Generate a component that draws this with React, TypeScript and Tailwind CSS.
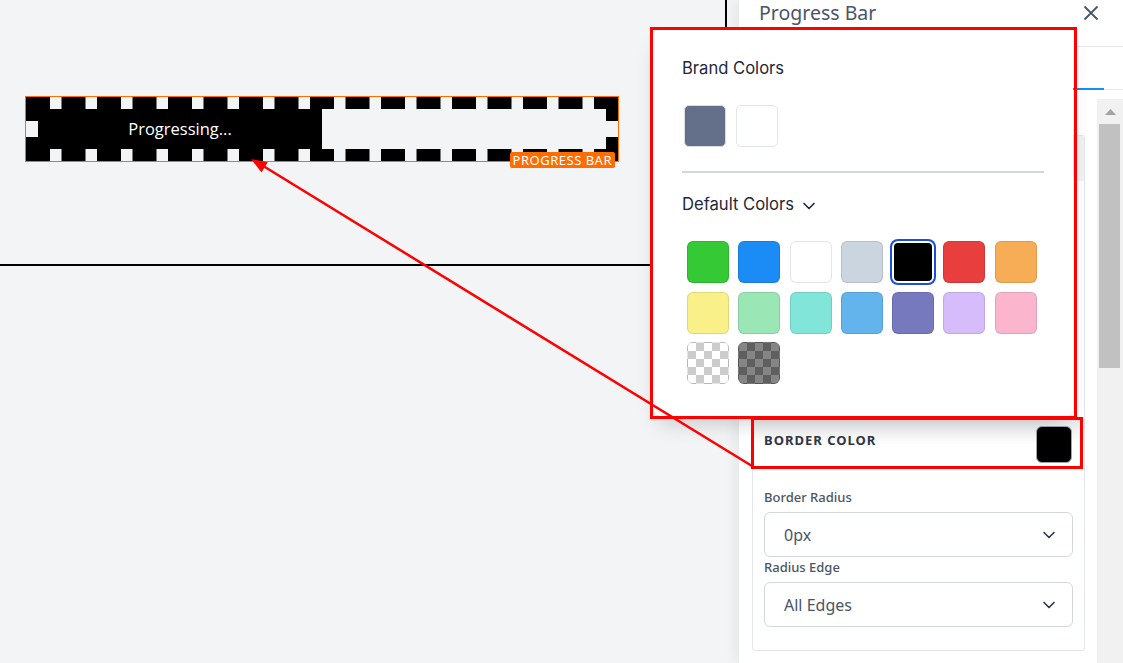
import React from 'react';
import { ChevronDown } from 'lucide-react';

const defaultSwatches = [
    'bg-[#34c935]',
    'bg-[#1b8cf5]',
    'bg-white',
    'bg-[#cbd5e0]',
    'bg-black',
    'bg-[#e83e3e]',
    'bg-[#f6ad55]',
    'bg-[#faf089]',
    'bg-[#9ae6b4]',
    'bg-[#81e6d9]',
    'bg-[#63b3ed]',
    'bg-[#7679bd]',
    'bg-[#d6bcfa]',
    'bg-[#fbb6ce]',
    '[background-image:repeating-conic-gradient(#cccccc_0%_25%,#ffffff_0%_50%)] [background-size:16px_16px]',
    '[background-image:repeating-conic-gradient(#5f5f5f_0%_25%,#858585_0%_50%)] [background-size:16px_16px]',
];

const SelectBox = ({ value }: { value: string }) => (
    <div className="flex h-[45px] items-center justify-between rounded-[6px] border border-[#d4d8de] bg-white pl-[19px] pr-[13px] text-[16px] text-[#4a5568]">
        <span>{value}</span>
        <ChevronDown size={20} strokeWidth={2} className="text-[#2d3748]" />
    </div>
);

const Field = ({ label, value }: { label: string; value: string }) => (
    <div>
        <div className="mb-[5px] text-[13px] font-medium leading-[20px] text-[#4a5568]">{label}</div>
        <SelectBox value={value} />
    </div>
);

const ColorPopover = () => (
    <div className="absolute left-[653px] top-[29px] h-[387px] w-[420px] rounded-[8px] bg-white px-[29px] pt-[27px] font-['Inter',sans-serif] shadow-[0_12px_22px_-6px_rgba(0,0,0,0.2)]">
        <div className="text-[16.6px] leading-[24px] text-[#1e293b]">Brand Colors</div>
        <div className="mt-[25px] flex gap-[10px] pl-[2px]">
            <div className="h-[42px] w-[42px] rounded-[5px] border border-[#d9dde3] bg-[#64708a]" />
            <div className="h-[42px] w-[42px] rounded-[5px] border border-[#e2e5ea] bg-white" />
        </div>
        <div className="mt-[24px] h-[2px] bg-[#cfd6e0]" />
        <div className="mt-[19px] flex items-center gap-[5px] text-[16.6px] leading-[24px] text-[#1e293b]">
            <span>Default Colors</span>
            <ChevronDown size={20} strokeWidth={2} className="mt-[3px]" />
        </div>
        <div className="mt-[25px] grid grid-cols-[repeat(7,42px)] gap-x-[9.3px] gap-y-[8.7px] pl-[5px]">
            {defaultSwatches.map((cls, i) =>
                i === 4 ? (
                    <div key={i} className="h-[42px] w-[42px] rounded-[6px] border-2 border-white bg-black ring-2 ring-[#1d4ed8]" />
                ) : (
                    <div key={i} className={`h-[42px] w-[42px] rounded-[6px] border border-black/10 ${cls}`} />
                )
            )}
        </div>
    </div>
);

export default function App() {
    return (
        <div className="relative flex h-[663px] w-[1123px] overflow-hidden bg-[#f3f4f6] font-['Noto_Sans',sans-serif]">
            {/* canvas */}
            <div className="w-[739px] shrink-0">
                <div className="h-[266px] w-[727px] border-b-2 border-r-2 border-black pl-[25px] pt-[96px]">
                    <div className="relative w-[594px] border border-[#ff6d00]">
                        <div className="flex h-[64px] border-[12px] border-dashed border-black">
                            <div className="flex w-1/2 items-center justify-center bg-black font-['Open_Sans',sans-serif] text-[16.5px] text-white">
                                Progressing...
                            </div>
                        </div>
                        <span className="absolute right-[3px] top-[55px] flex h-[16px] items-center rounded-[2px] bg-[#ff6d00] px-[3px] text-[13px] leading-[16px] tracking-[0.5px] text-white">
                            PROGRESS BAR
                        </span>
                    </div>
                </div>
            </div>

            {/* settings panel */}
            <div className="flex w-[384px] shrink-0 flex-col bg-white shadow-[-5px_0_10px_rgba(0,0,0,0.05)]">
                <div className="flex h-[47px] shrink-0 items-start justify-between border-b border-[#e5e7eb] pl-[20px] pr-[24px]">
                    <span className="text-[19.5px] leading-[25px] text-[#4a5568]">Progress Bar</span>
                    <svg width="16" height="16" viewBox="0 0 16 16" className="mt-[5px] text-[#4a5568]">
                        <path d="M1.5 1.5 14.5 14.5M14.5 1.5 1.5 14.5" stroke="currentColor" strokeWidth="1.8" fill="none" />
                    </svg>
                </div>
                <div className="flex h-[43px] shrink-0 border-b border-[#e5e7eb] pl-[20px] pr-[19px]">
                    <div className="flex-1" />
                    <div className="flex-1" />
                    <div className="relative flex-1">
                        <span className="absolute bottom-[-1px] left-0 right-0 h-[2px] bg-[#1a8cf5]" />
                    </div>
                </div>
                <div className="flex min-h-0 flex-1 pt-[9px]">
                    <div className="flex-1 pl-[13px] pr-[12px] pt-[36px]">
                        <div className="flex h-[516px] flex-col rounded-[3px] border border-[#e2e5ea]">
                            <div className="h-[45px] shrink-0 bg-[#f1f2f4]" />
                            <div className="h-[236px] shrink-0" />
                            <div className="flex h-[50px] shrink-0 items-start justify-between bg-[linear-gradient(#e8e9eb,#ffffff_55%)] pl-[11px] pr-[12px]">
                                <span className="mt-[13px] text-[13px] font-bold leading-[20px] tracking-[1px] text-[#2d3748]">
                                    BORDER COLOR
                                </span>
                                <div className="mt-[9px] h-[37px] w-[36px] rounded-[6px] border border-[#a0a4ab] bg-black" />
                            </div>
                            <div className="flex flex-col px-[11px] pt-[20px]">
                                <Field label="Border Radius" value="0px" />
                                <Field label="Radius Edge" value="All Edges" />
                            </div>
                        </div>
                    </div>
                    <div className="flex w-[26px] shrink-0 flex-col bg-[#f1f1f1]">
                        <div className="flex h-[25px] items-center justify-center">
                            <svg width="11" height="6" viewBox="0 0 11 6">
                                <polygon points="0,6 5.5,0 11,6" fill="#a3a3a3" />
                            </svg>
                        </div>
                        <div className="ml-[2px] h-[244px] w-[21px] bg-[#c1c1c1]" />
                    </div>
                </div>
            </div>

            <ColorPopover />

            {/* annotations */}
            <div className="pointer-events-none absolute left-[650px] top-[27px] h-[392px] w-[427px] border-[3px] border-[#ff0000]" />
            <div className="pointer-events-none absolute left-[751px] top-[417px] h-[52px] w-[332px] border-[3px] border-[#ff0000]" />
            <svg className="pointer-events-none absolute left-0 top-0" width="1123" height="663">
                <line x1="752" y1="466" x2="260" y2="164" stroke="#ff0000" strokeWidth="2.5" />
                <polygon points="251,159 261.5,172.5 267.7,162.3" fill="#ff0000" />
            </svg>
        </div>
    );
}
